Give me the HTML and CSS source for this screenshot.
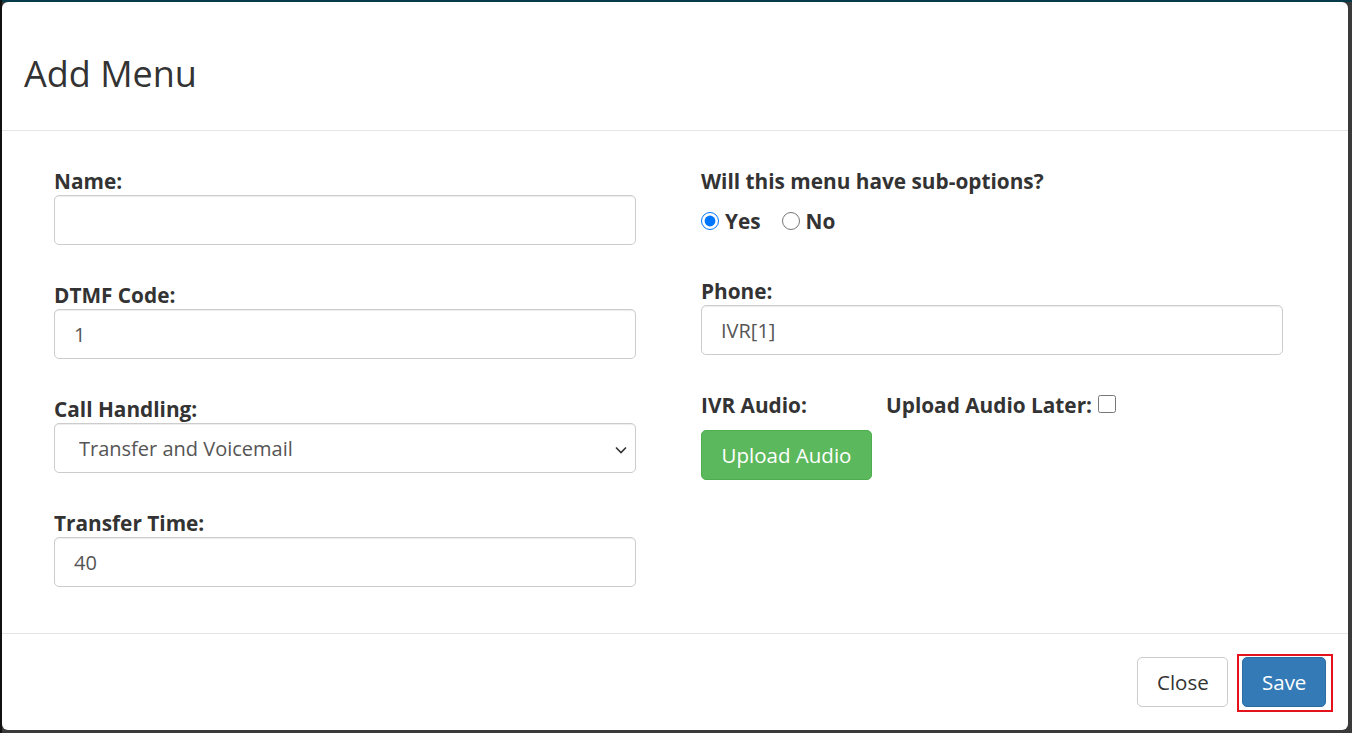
FILE: index.html
```html
<!DOCTYPE html>
<html lang="en">
<head>
  <meta charset="UTF-8">
  <meta name="viewport" content="width=device-width, initial-scale=1.0">
  <title>Add Menu</title>
  <link rel="stylesheet" href="styles.css">
</head>
<body>
  <div class="modal">
    <div class="modal-header">
      <h1>Add Menu</h1>
    </div>
    <form class="modal-body" id="menu-form">
      <div class="col">
        <div class="form-group">
          <label for="name">Name:</label>
          <input type="text" id="name" name="name">
        </div>
        <div class="form-group">
          <label for="dtmf">DTMF Code:</label>
          <input type="text" id="dtmf" name="dtmf" value="1">
        </div>
        <div class="form-group">
          <label for="handling">Call Handling:</label>
          <div class="select-wrap">
            <select id="handling" name="handling">
              <option>Transfer and Voicemail</option>
              <option>Transfer Only</option>
              <option>Voicemail Only</option>
            </select>
            <svg class="chevron" width="14" height="10" viewBox="0 0 14 10"><path d="M2 2.5 L7 7.5 L12 2.5" fill="none" stroke="#333" stroke-width="1.6"/></svg>
          </div>
        </div>
        <div class="form-group">
          <label for="transferTime">Transfer Time:</label>
          <input type="text" id="transferTime" name="transferTime" value="40">
        </div>
      </div>
      <div class="col">
        <div class="form-group">
          <label>Will this menu have sub-options?</label>
          <div class="radios">
            <label class="radio"><input type="radio" name="sub" value="yes" checked> Yes</label>
            <label class="radio"><input type="radio" name="sub" value="no"> No</label>
          </div>
        </div>
        <div class="form-group">
          <label for="phone">Phone:</label>
          <input type="text" id="phone" name="phone" value="IVR[1]">
        </div>
        <div class="audio-row">
          <label class="audio-label">IVR Audio:</label>
          <label class="later" for="later">Upload Audio Later: <input type="checkbox" id="later" name="later"></label>
        </div>
        <button type="button" class="btn btn-success">Upload Audio</button>
      </div>
    </form>
    <div class="modal-footer">
      <button type="button" class="btn btn-default">Close</button>
      <span class="marked">
        <button type="submit" form="menu-form" class="btn btn-primary">Save</button>
      </span>
    </div>
  </div>
</body>
</html>
```

FILE: styles.css
```css
html {
  background-color: #3a3a3a;
}
body {
  font-family: "Open Sans", Arial, sans-serif;
  color: #333;
  margin: 0;
  padding: 2px 4px 3px 2px;
  background: linear-gradient(to bottom, #063a4a 0, #063a4a 2px, #3a3a3a 2px);
  box-shadow: inset 2px 0 0 #111;
}
.modal {
  background-color: #fff;
  border-radius: 6px;
  height: 728px;
  display: flex;
  flex-direction: column;
  overflow: hidden;
}
.modal-header {
  padding: 52px 22px 36px;
  border-bottom: 1px solid #e5e5e5;
}
h1 {
  margin: 0;
  font-size: 36px;
  font-weight: 400;
  line-height: 40px;
  color: #333;
}
.modal-body {
  flex: 1;
  display: grid;
  grid-template-columns: 582px 582px;
  column-gap: 65px;
  padding: 38px 0 0 52px;
  align-content: start;
}
.form-group {
  margin-bottom: 38px;
}
label {
  display: block;
  font-size: 20.8px;
  font-weight: 700;
  line-height: 24px;
  margin-bottom: 2px;
}
input[type="text"],
select {
  display: block;
  width: 100%;
  height: 50px;
  box-sizing: border-box;
  padding: 0 19px;
  font-family: inherit;
  font-size: 20px;
  color: #555;
  background-color: #fff;
  border: 1.5px solid #ccc;
  border-radius: 5px;
  box-shadow: inset 0 1px 1px rgba(0, 0, 0, 0.075);
  outline: none;
}
select {
  appearance: none;
  padding-left: 24px;
}
.select-wrap {
  position: relative;
}
.chevron {
  position: absolute;
  right: 8px;
  top: 22px;
}
.radios {
  display: flex;
  gap: 21px;
  margin-top: 13px;
  height: 30px;
  margin-bottom: -32px;
  padding-bottom: 37px;
}
.radio {
  display: flex;
  align-items: center;
  gap: 6px;
  margin: 0;
}
.radio input {
  width: 18px;
  height: 18px;
  margin: 0;
}
.audio-row {
  display: flex;
  margin-bottom: 13px;
}
.audio-label {
  width: 185px;
  margin: 0;
}
.later {
  display: flex;
  align-items: flex-start;
  gap: 6px;
  margin: 0;
}
.later input {
  width: 18px;
  height: 18px;
  margin: 2px 0 0;
}
.btn {
  font-family: inherit;
  font-size: 20.5px;
  height: 50px;
  padding: 0 19px;
  border-radius: 5px;
  border: 1.5px solid transparent;
  cursor: pointer;
}
.btn-success {
  background-color: #5cb85c;
  border-color: #4cae4c;
  color: #fff;
  width: 171px;
}
.btn-default {
  background-color: #fff;
  border-color: #ccc;
  color: #333;
  width: 91px;
}
.btn-primary {
  background-color: #337ab7;
  border-color: #2e6da4;
  color: #fff;
  width: 84px;
  display: block;
}
.marked {
  position: relative;
}
.marked::after {
  content: "";
  position: absolute;
  top: -3px;
  right: -7px;
  bottom: -5px;
  left: -5px;
  border: 2.5px solid #e4121c;
  pointer-events: none;
}
.modal-footer {
  border-top: 1px solid #e5e5e5;
  padding: 23px 22px 23px;
  display: flex;
  justify-content: flex-end;
  gap: 14px;
}
```
